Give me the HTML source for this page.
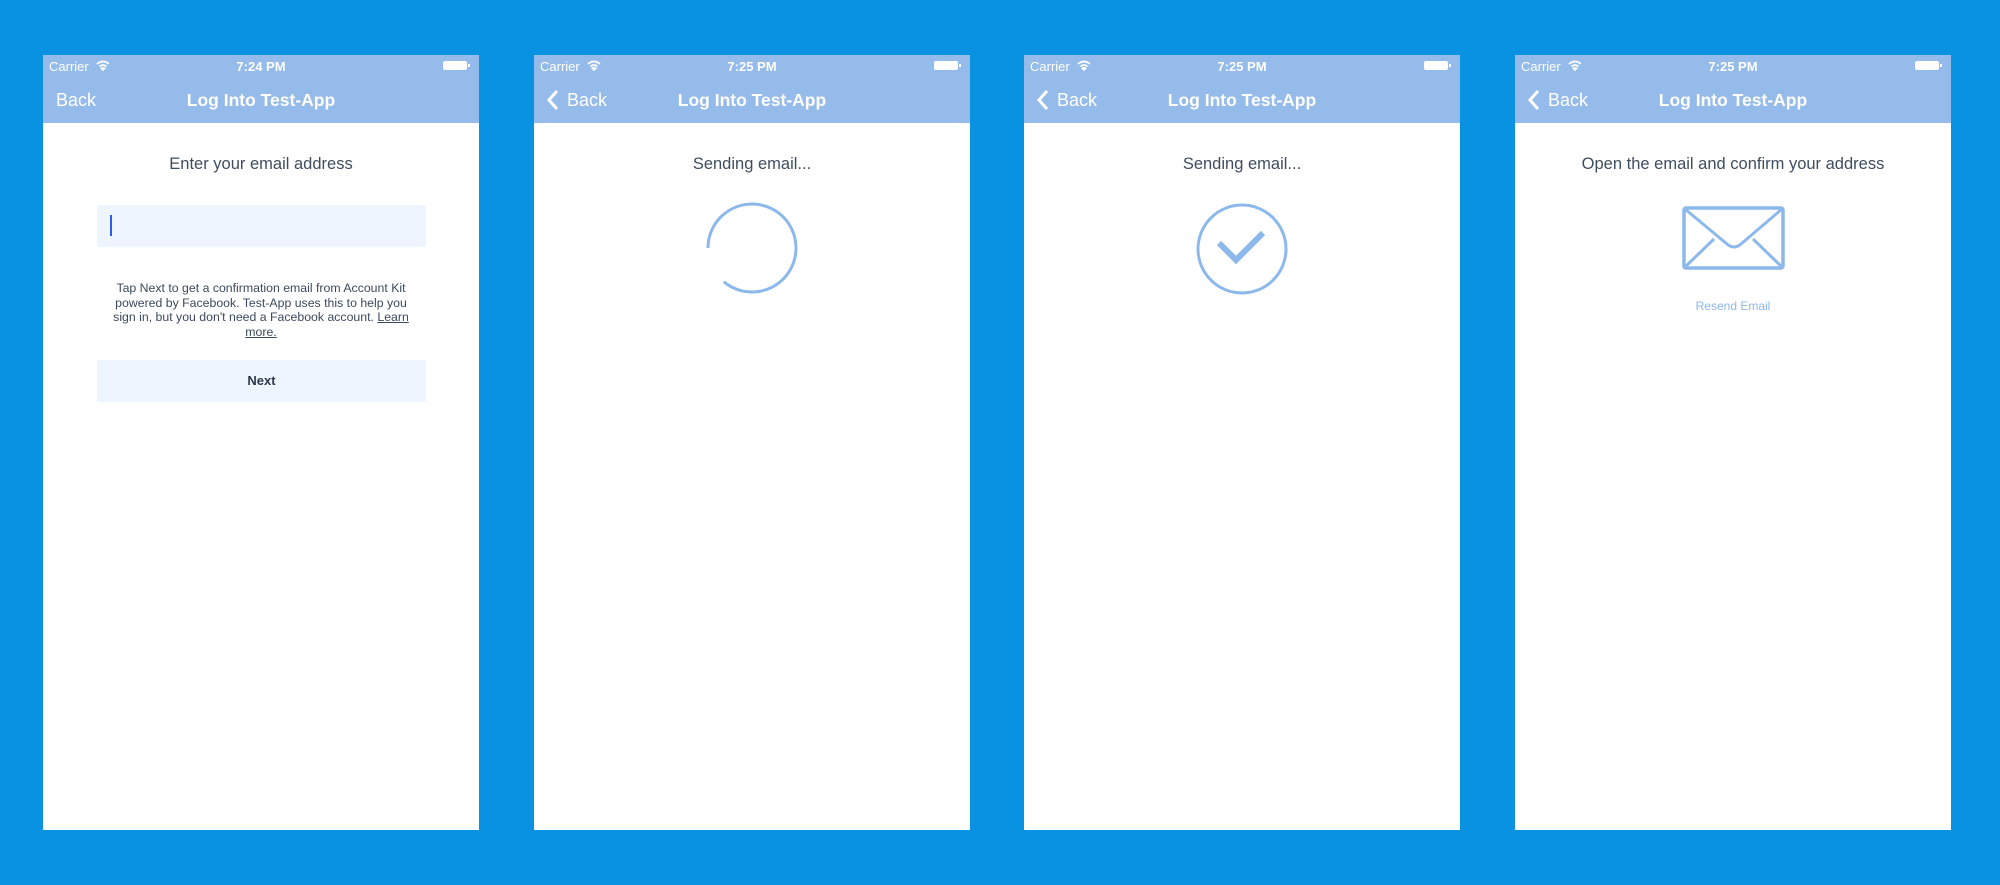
<!DOCTYPE html>
<html><head><meta charset="utf-8"><style>
*{margin:0;padding:0;box-sizing:border-box}
body{width:2000px;height:885px;background:#0a92e2;position:relative;overflow:hidden;font-family:"Liberation Sans",sans-serif}
.ph{position:absolute;top:55px;width:436px;height:775px;background:#fff}
.nav{position:absolute;left:0;top:0;width:100%;height:68px;background:#95bbea;color:#fff}
.sb{position:absolute;top:4px;font-size:13px;line-height:16px}
.t{position:absolute;left:0;width:100%;text-align:center}
.title{top:34px;font-size:17.5px;font-weight:bold;line-height:22px}
.back{position:absolute;top:34px;font-size:18px;line-height:22px}
.bat{position:absolute;right:12px;top:6px;width:24px;height:9px;background:#fff;border-radius:2px}
.bat:after{content:"";position:absolute;right:-3px;top:3px;width:2px;height:3px;background:#fff}
.h{top:99px;font-size:16.5px;color:#3f4d60;line-height:20px}
.wf{position:absolute;left:53px;top:5px}
</style></head><body>
<div class="ph" style="left:43px">
 <div class="nav">
  <div class="sb" style="left:6px">Carrier</div>
  <svg class="wf" width="14" height="11"><path d="M1 4 Q7 -1 13 4 M3.5 6.5 Q7 3.5 10.5 6.5 M7 10 L5.3 8.3 Q7 7 8.7 8.3 Z" stroke="#fff" stroke-width="1.6" fill="none"/></svg>
  <div class="sb t" style="font-weight:bold">7:24 PM</div>
  <div class="bat"></div>
  <div class="back" style="left:13px">Back</div>
  <div class="t title">Log Into Test-App</div>
 </div>
 <div class="t h">Enter your email address</div>
 <div style="position:absolute;left:54px;top:150px;width:329px;height:42px;background:#eef5fe;border-radius:2px"><div style="position:absolute;left:13px;top:10px;width:2px;height:21px;background:#2a5cf0"></div></div>
 <div class="t" style="top:226px;left:62px;width:312px;font-size:12.3px;line-height:14.5px;color:#3b4a5e">Tap Next to get a confirmation email from Account Kit powered by Facebook. Test-App uses this to help you sign in, but you don't need a Facebook account. <u>Learn more.</u></div>
 <div style="position:absolute;left:54px;top:305px;width:329px;height:42px;background:#eef5fe;border-radius:2px;text-align:center;line-height:42px;font-size:13px;font-weight:bold;color:#2c3a4e">Next</div>
</div>

<div class="ph" style="left:534px">
 <div class="nav">
  <div class="sb" style="left:6px">Carrier</div>
  <svg class="wf" width="14" height="11"><path d="M1 4 Q7 -1 13 4 M3.5 6.5 Q7 3.5 10.5 6.5 M7 10 L5.3 8.3 Q7 7 8.7 8.3 Z" stroke="#fff" stroke-width="1.6" fill="none"/></svg>
  <div class="sb t" style="font-weight:bold">7:25 PM</div>
  <div class="bat"></div>
  <svg style="position:absolute;left:12px;top:34px" width="14" height="22"><path d="M11 2 L3 11 L11 20" stroke="#fff" stroke-width="3" fill="none"/></svg>
  <div class="back" style="left:33px">Back</div>
  <div class="t title">Log Into Test-App</div>
 </div>
 <div class="t h">Sending email...</div>
 <svg style="position:absolute;left:168px;top:143px" width="100" height="100"><path d="M6 50 A44 44 0 1 1 21.7 83.7" stroke="#8cb8ec" stroke-width="3" fill="none"/></svg>
</div>

<div class="ph" style="left:1024px">
 <div class="nav">
  <div class="sb" style="left:6px">Carrier</div>
  <svg class="wf" width="14" height="11"><path d="M1 4 Q7 -1 13 4 M3.5 6.5 Q7 3.5 10.5 6.5 M7 10 L5.3 8.3 Q7 7 8.7 8.3 Z" stroke="#fff" stroke-width="1.6" fill="none"/></svg>
  <div class="sb t" style="font-weight:bold">7:25 PM</div>
  <div class="bat"></div>
  <svg style="position:absolute;left:12px;top:34px" width="14" height="22"><path d="M11 2 L3 11 L11 20" stroke="#fff" stroke-width="3" fill="none"/></svg>
  <div class="back" style="left:33px">Back</div>
  <div class="t title">Log Into Test-App</div>
 </div>
 <div class="t h">Sending email...</div>
 <svg style="position:absolute;left:168px;top:144px" width="100" height="100"><circle cx="50" cy="50" r="44" stroke="#8cb8ec" stroke-width="3" fill="none"/><path d="M27 44 L44 61 L71 34" stroke="#8cb8ec" stroke-width="6" fill="none"/></svg>
</div>

<div class="ph" style="left:1515px">
 <div class="nav">
  <div class="sb" style="left:6px">Carrier</div>
  <svg class="wf" width="14" height="11"><path d="M1 4 Q7 -1 13 4 M3.5 6.5 Q7 3.5 10.5 6.5 M7 10 L5.3 8.3 Q7 7 8.7 8.3 Z" stroke="#fff" stroke-width="1.6" fill="none"/></svg>
  <div class="sb t" style="font-weight:bold">7:25 PM</div>
  <div class="bat"></div>
  <svg style="position:absolute;left:12px;top:34px" width="14" height="22"><path d="M11 2 L3 11 L11 20" stroke="#fff" stroke-width="3" fill="none"/></svg>
  <div class="back" style="left:33px">Back</div>
  <div class="t title">Log Into Test-App</div>
 </div>
 <div class="t h">Open the email and confirm your address</div>
 <svg style="position:absolute;left:167px;top:151px" width="104" height="66"><rect x="2" y="2" width="99" height="60" rx="2" stroke="#8cb8ec" stroke-width="3.5" fill="none"/><path d="M3 3 L45 38 Q52 44 59 38 L100 3 M3 61 L32 33 M100 61 L71 33" stroke="#8cb8ec" stroke-width="3" fill="none"/></svg>
 <div class="t" style="top:244px;font-size:12px;color:#8cb8ec">Resend Email</div>
</div>
</body></html>
